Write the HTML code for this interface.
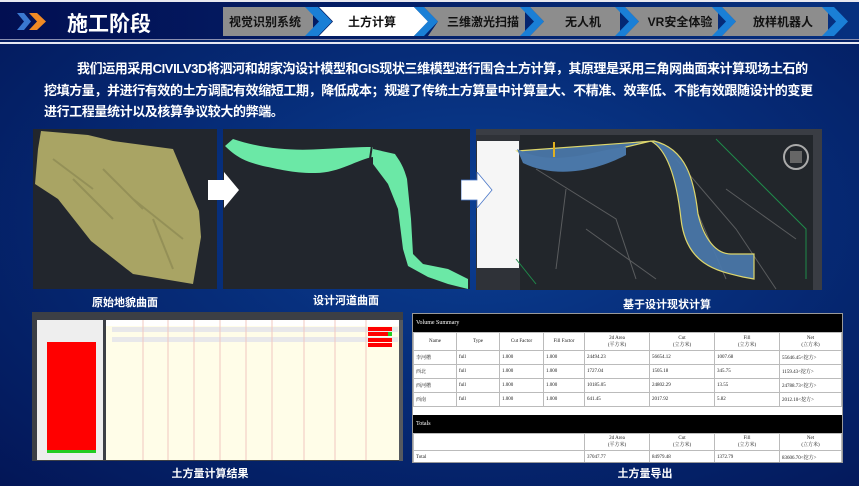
<!DOCTYPE html>
<html><head><meta charset="utf-8"><style>
*{margin:0;padding:0;box-sizing:border-box}
body{width:859px;height:486px;overflow:hidden;position:relative;font-family:"Liberation Sans","Noto Sans CJK SC",sans-serif;background:radial-gradient(ellipse at 55% 45%,#0b3f93 0%,#062c78 45%,#031657 100%)}
.abs{position:absolute}
.para{left:44px;top:58px;width:800px;color:#fff;font-weight:bold;font-size:13px;line-height:21.5px;letter-spacing:-0.4px;white-space:nowrap}
.cap{color:#fff;font-weight:bold;font-size:11px;text-align:center;width:200px}
table{border-collapse:collapse;font-family:"Liberation Serif","Noto Serif CJK SC",serif;font-size:5px;color:#222}
td{border:1px solid #bbb;padding:0 2px;height:14px;vertical-align:middle}
</style></head><body>
<div class="abs" style="left:0;top:0;width:859px;height:2px;background:#e8e8f0"></div>
<div class="abs" style="left:0;top:2px;width:859px;height:37px;background:linear-gradient(90deg,#020f52,#04246e 60%,#06307f)"></div>
<div class="abs" style="left:0;top:39px;width:859px;height:1px;background:#8a8fb0"></div>
<div class="abs" style="left:0;top:42px;width:859px;height:2px;background:#e6e8f2"></div>
<svg class="abs" style="left:0;top:0" width="859" height="44">
<polygon points="17,13 24,13 31,21.5 24,30 17,30 24,21.5" fill="#3a78d0"/>
<polygon points="29,13 37,13 46,21.5 37,30 29,30 37,21.5" fill="#f08a24"/>
<g>
<rect x="223" y="7" width="90" height="29" fill="#8d8d8d"/>
<polygon points="305,7 318,7 332,21.5 318,36 305,36 319,21.5" fill="#1a7fd6"/>
<polygon points="319,7 414,7 428,21.5 414,36 319,36 333,21.5" fill="#fff"/>
<polygon points="414,7 424,7 438,21.5 424,36 414,36 428,21.5" fill="#1a7fd6"/>
<polygon points="428,7 525,7 525,36 428,36 438,21.5 424,7" fill="#8d8d8d"/>
<polygon points="520,7 530,7 544,21.5 530,36 520,36 534,21.5" fill="#1a7fd6"/>
<polygon points="530,7 620,7 620,36 530,36 544,21.5" fill="#8d8d8d"/>
<polygon points="615,7 625,7 639,21.5 625,36 615,36 629,21.5" fill="#1a7fd6"/>
<polygon points="625,7 718,7 718,36 625,36 639,21.5" fill="#8d8d8d"/>
<polygon points="712,7 722,7 736,21.5 722,36 712,36 726,21.5" fill="#1a7fd6"/>
<polygon points="722,7 828,7 828,36 722,36 736,21.5" fill="#8d8d8d"/>
<polygon points="822,7 834,7 848,21.5 834,36 822,36 836,21.5" fill="#1a7fd6"/>
</g>
<g font-family="Liberation Sans,Noto Sans CJK SC,sans-serif" font-weight="bold" font-size="12" fill="#111" text-anchor="middle">
<text x="265" y="26">视觉识别系统</text>
<text x="372" y="26">土方计算</text>
<text x="483" y="26">三维激光扫描</text>
<text x="583" y="26">无人机</text>
<text x="680" y="26">VR安全体验</text>
<text x="783" y="26">放样机器人</text>
</g>
<text x="67" y="31" font-family="Liberation Sans,Noto Sans CJK SC,sans-serif" font-weight="bold" font-size="21" fill="#fff">施工阶段</text>
</svg>

<div class="abs para"><span style="padding-left:33px"></span>我们运用采用CIVILV3D将泗河和胡家沟设计模型和GIS现状三维模型进行围合土方计算，其原理是采用三角网曲面来计算现场土石的<br>挖填方量，并进行有效的土方调配有效缩短工期，降低成本；规避了传统土方算量中计算量大、不精准、效率低、不能有效跟随设计的变更<br>进行工程量统计以及核算争议较大的弊端。</div>

<!-- image 1 -->
<svg class="abs" style="left:33px;top:129px" width="184" height="160">
<rect width="184" height="160" fill="#22262d"/>
<polygon points="8,2 55,6 80,12 140,20 166,82 168,108 160,155 130,150 100,145 58,112 25,70 2,55 5,20" fill="#a9a464"/>
<path d="M20,30 L60,60 M70,40 L110,80 M100,70 L150,110 M40,50 L80,90 M120,90 L140,140" stroke="#878450" stroke-width="2" opacity=".6"/>
</svg>
<!-- image 2 -->
<svg class="abs" style="left:223px;top:129px" width="247" height="160">
<rect width="247" height="160" fill="#22262d"/>
<path d="M2,17 L10,10 C40,20 70,22 100,20 C120,19 135,18 150,18 L150,28 C135,30 115,45 90,44 C70,44 55,40 40,37 C25,33 15,30 2,17 Z" fill="#6be8a6"/>
<path d="M150,20 L172,25 C175,30 180,35 184,50 L188,90 L190,125 L200,135 L225,140 L245,150 L245,160 L225,155 L205,148 L185,137 L180,120 L175,80 L165,55 L150,35 Z" fill="#6be8a6"/>
<line x1="149" y1="16" x2="147" y2="30" stroke="#22262d" stroke-width="2"/>
</svg>
<!-- image 3 -->
<svg class="abs" style="left:476px;top:129px" width="346" height="161">
<rect width="346" height="161" fill="#22262b"/>
<rect width="346" height="6" fill="#3a3d44"/>
<rect x="0" y="6" width="44" height="155" fill="#2f3238"/>
<rect x="1" y="12" width="42" height="127" fill="#f6f6f6"/>
<g stroke="#888" stroke-width="1" fill="none" opacity=".55">
<path d="M60,40 L140,90 L160,150 M90,60 L80,140 M200,30 L260,100 L300,160 M220,80 L250,150 M250,60 L320,110 M110,100 L180,150"/>
</g>
<path d="M240,10 L330,100 L330,150" stroke="#1f8a4a" stroke-width="1" fill="none"/>
<path d="M40,130 L60,155" stroke="#1f8a4a" fill="none"/>
<path d="M41,22 C70,40 110,35 150,18 L175,12 C190,20 200,45 205,90 C210,135 240,142 267,148 L278,150 L278,125 L255,125 C240,125 228,110 222,85 C218,50 210,20 178,12 Z" fill="#4a77a8" stroke="#e8e070" stroke-width="1.2" opacity=".95"/>
<path d="M41,20 C80,40 120,20 150,18 L150,26 C120,42 80,50 47,34 Z" fill="#4a77a8"/>
<line x1="78" y1="13" x2="78" y2="28" stroke="#e0b020" stroke-width="2"/>
<circle cx="320" cy="28" r="12" fill="none" stroke="#aaa" stroke-width="2"/>
<rect x="314" y="22" width="12" height="12" fill="#666"/>
<rect x="337" y="6" width="9" height="155" fill="#3a3d44"/>
</svg>
<!-- arrows -->
<svg class="abs" style="left:208px;top:172px" width="32" height="36"><polygon points="0,8 16,8 16,0 31,18 16,36 16,28 0,28" fill="#fff"/></svg>
<svg class="abs" style="left:461px;top:172px" width="32" height="36"><polygon points="0,8 16,8 16,0 31,18 16,36 16,28 0,28" fill="#fff" stroke="#4a77c8" stroke-width="0.8"/></svg>

<div class="abs cap" style="left:25px;top:294px">原始地貌曲面</div>
<div class="abs cap" style="left:246px;top:292px">设计河道曲面</div>
<div class="abs cap" style="left:567px;top:296px">基于设计现状计算</div>

<!-- bottom left software -->
<svg class="abs" style="left:32px;top:312px" width="371" height="149">
<rect width="371" height="149" fill="#3c3f45"/>
<rect x="5" y="8" width="66" height="140" fill="#eeeeee"/>
<rect x="15" y="30" width="49" height="108" fill="#ff0000"/>
<rect x="15" y="138" width="49" height="3" fill="#22cc22"/>
<rect x="74" y="8" width="293" height="140" fill="#fffde8"/>
<rect x="74" y="8" width="293" height="6" fill="#ffffff"/>
<g fill="#e8e8ea"><rect x="80" y="15" width="286" height="5"/><rect x="80" y="25" width="286" height="5"/></g>
<g stroke="#f2c8c0" stroke-width="1"><line x1="111" y1="8" x2="111" y2="148"/><line x1="136" y1="8" x2="136" y2="148"/><line x1="162" y1="8" x2="162" y2="148"/><line x1="188" y1="8" x2="188" y2="148"/><line x1="214" y1="8" x2="214" y2="148"/><line x1="240" y1="8" x2="240" y2="148"/><line x1="272" y1="8" x2="272" y2="148"/><line x1="303" y1="8" x2="303" y2="148"/><line x1="334" y1="8" x2="334" y2="148"/></g>
<g fill="#ff0000"><rect x="336" y="15" width="24" height="4"/><rect x="336" y="20" width="20" height="4"/><rect x="336" y="26" width="24" height="4"/><rect x="336" y="31" width="24" height="4"/></g>
<rect x="356" y="20" width="4" height="4" fill="#22cc22"/>
<rect x="367" y="8" width="4" height="141" fill="#55595f"/>
</svg>
<div class="abs cap" style="left:110px;top:465px">土方量计算结果</div>

<!-- table -->
<div class="abs" style="left:412px;top:313px;width:431px;height:150px;background:#fff;border:1px solid #999;overflow:hidden">
<div style="height:18px;background:#000;color:#fff;font-family:'Liberation Serif',serif;font-size:6px;padding:6px 3px">Volume Summary</div>
<table style="width:100%">
<tr style="text-align:center"><td style="width:43px;height:18px">Name</td><td style="width:43px">Type</td><td style="width:44px">Cut Factor</td><td style="width:41px">Fill Factor</td><td style="width:65px">2d Area<br>(平方米)</td><td style="width:65px">Cut<br>(立方米)</td><td style="width:65px">Fill<br>(立方米)</td><td>Net<br>(立方米)</td></tr>
<tr><td>李河槽</td><td>full</td><td>1.000</td><td>1.000</td><td>24494.23</td><td>56654.12</td><td>1007.68</td><td>55646.45&lt;挖方&gt;</td></tr>
<tr><td>西北</td><td>full</td><td>1.000</td><td>1.000</td><td>1727.04</td><td>1505.18</td><td>345.75</td><td>1159.43&lt;挖方&gt;</td></tr>
<tr><td>西河槽</td><td>full</td><td>1.000</td><td>1.000</td><td>10185.05</td><td>24802.29</td><td>13.55</td><td>24788.73&lt;挖方&gt;</td></tr>
<tr><td>西南</td><td>full</td><td>1.000</td><td>1.000</td><td>641.45</td><td>2017.92</td><td>5.82</td><td>2012.10&lt;挖方&gt;</td></tr>
</table>
<div style="height:8px"></div>
<div style="height:18px;background:#000;color:#fff;font-family:'Liberation Serif',serif;font-size:6px;padding:6px 3px">Totals</div>
<table style="width:100%">
<tr style="text-align:center"><td style="width:171px;height:17px"></td><td style="width:65px">2d Area<br>(平方米)</td><td style="width:65px">Cut<br>(立方米)</td><td style="width:65px">Fill<br>(立方米)</td><td>Net<br>(立方米)</td></tr>
<tr><td>Total</td><td>37047.77</td><td>84979.48</td><td>1372.79</td><td>83606.70&lt;挖方&gt;</td></tr>
</table>
</div>
<div class="abs cap" style="left:545px;top:465px">土方量导出</div>
</body></html>
